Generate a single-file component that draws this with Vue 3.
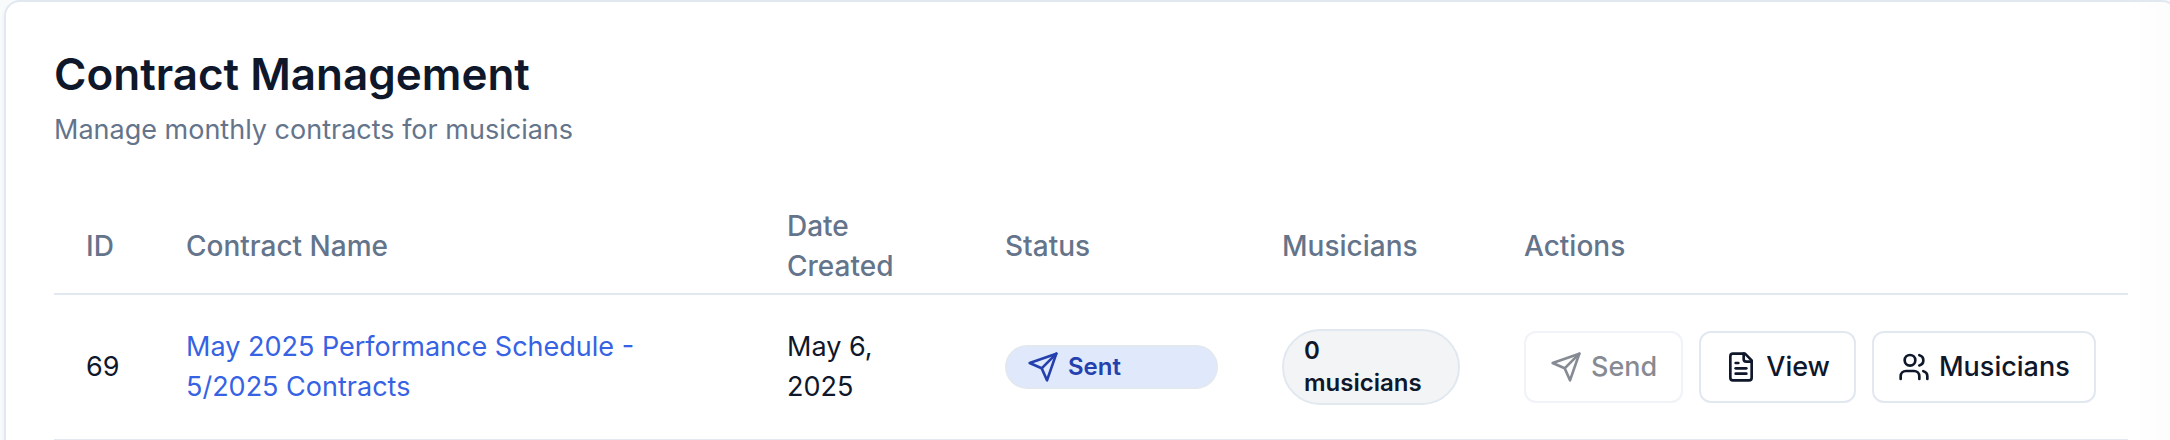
<script setup>
const contracts = [
  {
    id: 69,
    name: 'May 2025 Performance Schedule - 5/2025 Contracts',
    date: 'May 6, 2025',
    status: 'Sent',
    musicians: 0,
    canSend: false,
  },
]
</script>

<template>
  <main class="page">
    <section class="card">
      <header class="card-header">
        <h1>Contract Management</h1>
        <p>Manage monthly contracts for musicians</p>
      </header>
      <table>
        <colgroup>
          <col class="col-id" />
          <col />
          <col class="col-date" />
          <col class="col-status" />
          <col class="col-musicians" />
          <col class="col-actions" />
        </colgroup>
        <thead>
          <tr>
            <th scope="col">ID</th>
            <th scope="col">Contract Name</th>
            <th scope="col">Date Created</th>
            <th scope="col">Status</th>
            <th scope="col">Musicians</th>
            <th scope="col">Actions</th>
          </tr>
        </thead>
        <tbody>
          <tr v-for="c in contracts" :key="c.id">
            <td>{{ c.id }}</td>
            <td><a href="#">{{ c.name }}</a></td>
            <td>{{ c.date }}</td>
            <td>
              <div class="badge badge-sent">
                <svg class="icon" viewBox="0 0 24 24" aria-hidden="true">
                  <path d="m22 2-7 20-4-9-9-4Z" />
                  <path d="M22 2 11 13" />
                </svg>
                {{ c.status }}
              </div>
            </td>
            <td>
              <div class="badge badge-count">{{ c.musicians }} musicians</div>
            </td>
            <td>
              <div class="actions">
                <button type="button" :disabled="!c.canSend">
                  <svg class="icon" viewBox="0 0 24 24" aria-hidden="true">
                    <path d="m22 2-7 20-4-9-9-4Z" />
                    <path d="M22 2 11 13" />
                  </svg>
                  Send
                </button>
                <button type="button">
                  <svg class="icon" viewBox="0 0 24 24" aria-hidden="true">
                    <path d="M15 2H6a2 2 0 0 0-2 2v16a2 2 0 0 0 2 2h12a2 2 0 0 0 2-2V7Z" />
                    <path d="M14 2v4a2 2 0 0 0 2 2h4" />
                    <path d="M10 9H8" />
                    <path d="M16 13H8" />
                    <path d="M16 17H8" />
                  </svg>
                  View
                </button>
                <button type="button">
                  <svg class="icon" viewBox="0 0 24 24" aria-hidden="true">
                    <path d="M16 21v-2a4 4 0 0 0-4-4H6a4 4 0 0 0-4 4v2" />
                    <circle cx="9" cy="7" r="4" />
                    <path d="M22 21v-2a4 4 0 0 0-3-3.87" />
                    <path d="M16 3.13a4 4 0 0 1 0 7.75" />
                  </svg>
                  Musicians
                </button>
              </div>
            </td>
          </tr>
        </tbody>
      </table>
    </section>
  </main>
</template>

<style>
body {
  background: #f8fafc;
  overflow: hidden;
}
</style>

<style scoped>
.page {
  font-family: Inter, 'Liberation Sans', sans-serif;
  font-size: 27px;
  line-height: 40px;
  color: #0f172a;
}
.card {
  box-sizing: border-box;
  margin: 0 -8px 0 4px;
  padding: 48px 48px 0;
  background: #fff linear-gradient(to left, #fcfcfc, #fff) right / 48px 100% no-repeat;
  border: 2px solid #e2e8f0;
  border-bottom: 0;
  border-radius: 16px 16px 0 0;
  box-shadow: 0 2px 4px rgba(0, 0, 0, 0.05);
}
.card-header {
  display: flex;
  flex-direction: column;
  gap: 12px;
  padding-bottom: 48px;
}
h1 {
  margin: 0;
  font-size: 44px;
  line-height: 48px;
  font-weight: 600;
}
p {
  margin: 0;
  color: #64748b;
}
table {
  width: 100%;
  table-layout: fixed;
  border-collapse: collapse;
}
.col-id { width: 100px; }
.col-date { width: 218px; }
.col-status { width: 277px; }
.col-musicians { width: 242px; }
.col-actions { width: 636px; }
tr {
  border-bottom: 2px solid #e2e8f0;
}
th {
  box-sizing: border-box;
  height: 96px;
  padding: 0 32px;
  text-align: left;
  vertical-align: middle;
  font-size: 28px;
  font-weight: 500;
  color: #64748b;
}
td {
  padding: 32px;
  vertical-align: middle;
}
a {
  color: #3662e3;
  text-decoration: none;
}
.icon {
  flex: none;
  width: 32px;
  height: 32px;
  fill: none;
  stroke: currentColor;
  stroke-width: 2;
  stroke-linecap: round;
  stroke-linejoin: round;
}
.badge {
  display: flex;
  align-items: center;
  gap: 9px;
  padding: 4px 20px;
  border: 2px solid #e2e8f0;
  border-radius: 38px;
  font-size: 24px;
  line-height: 32px;
  font-weight: 600;
}
.badge-sent {
  background: #dfe9fb;
  color: #2540ae;
}
.badge-count {
  background: #f3f4f6;
}
.actions {
  display: flex;
  gap: 16px;
}
button {
  display: flex;
  align-items: center;
  gap: 9px;
  box-sizing: border-box;
  height: 72px;
  padding: 0 24px;
  border: 2px solid #e2e8f0;
  border-radius: 12px;
  background: #fff;
  color: #0f172a;
  font: inherit;
  font-weight: 500;
  white-space: nowrap;
}
button:disabled {
  opacity: 0.5;
}
</style>
